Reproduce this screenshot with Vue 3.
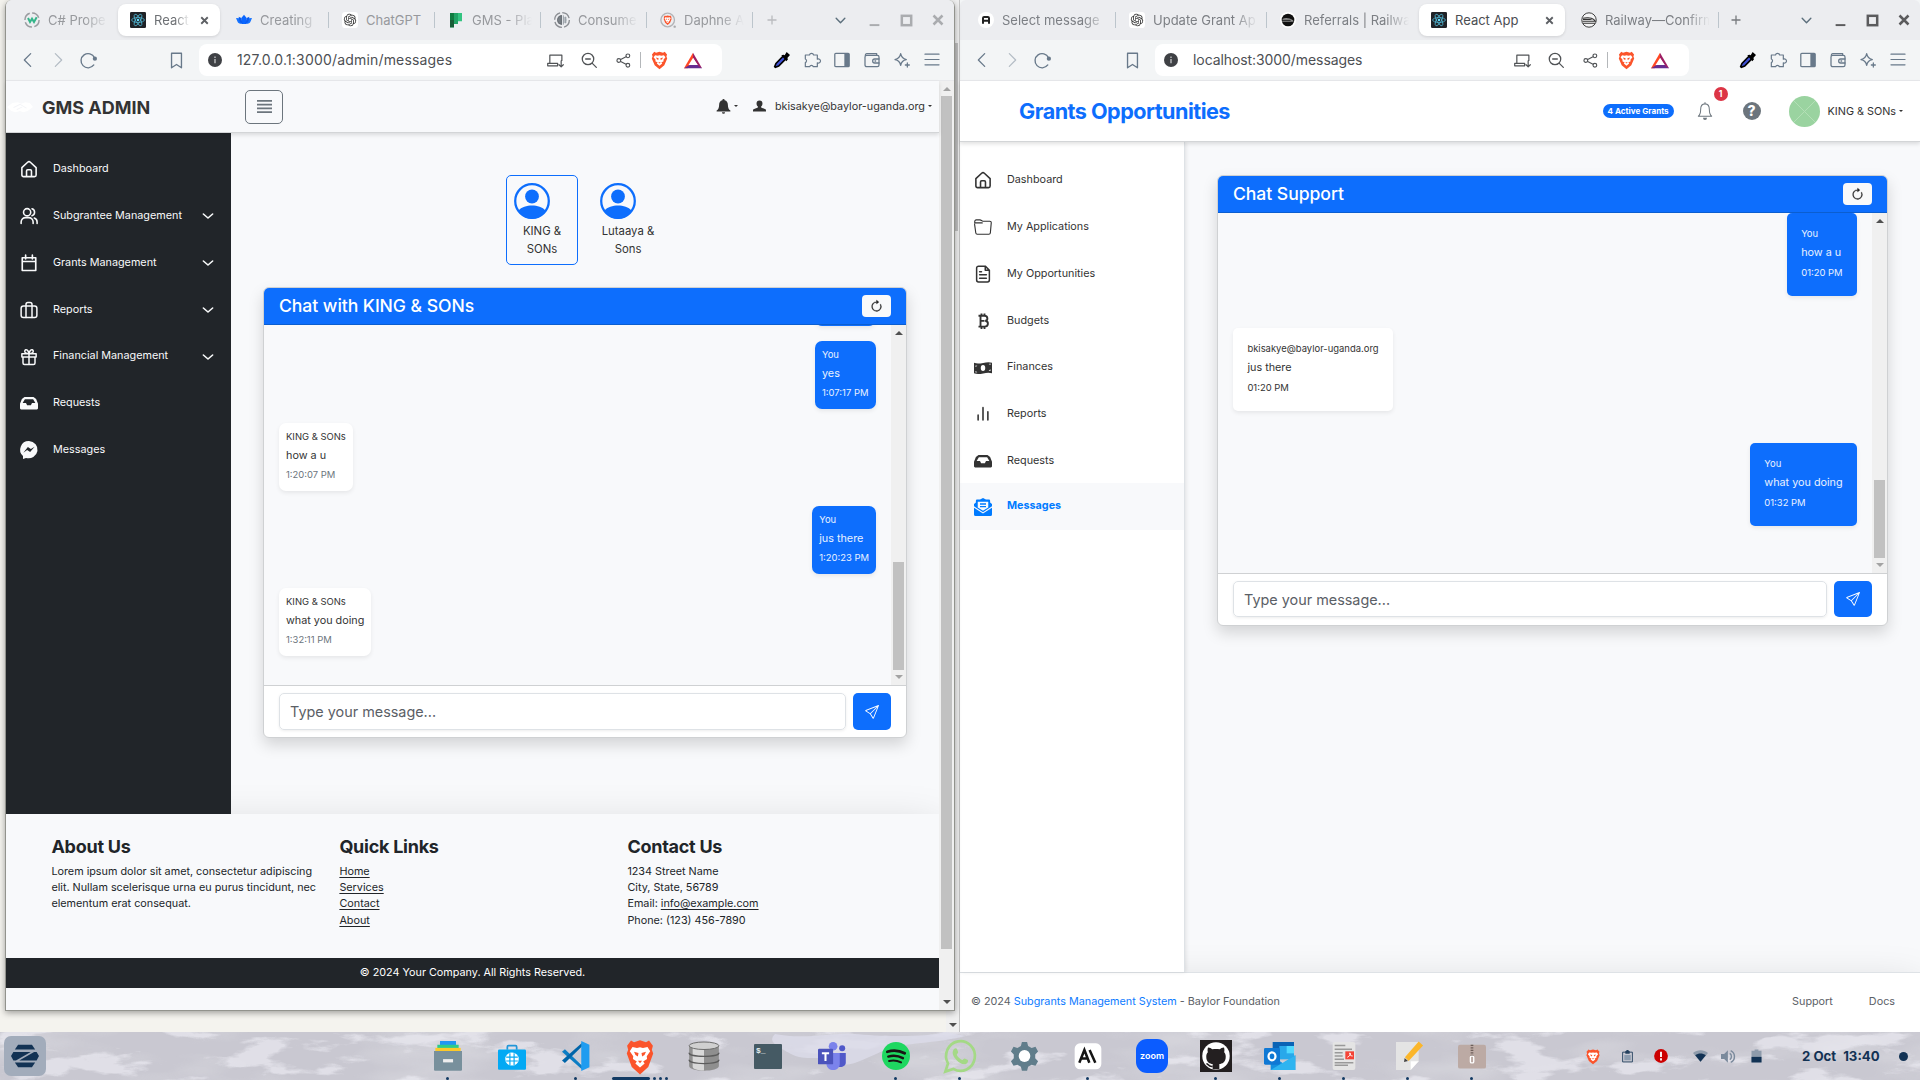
<script setup>
import { h } from 'vue'

const lion = '<path d="M8 3.2 12 2l4 1.2 2-1 2.6 3.2-.7 2.4.9 2.3-3.3 8.3L12 23l-5.500-4.600L3.200 10.100l.9-2.300-.7-2.400L6 2.200z" fill="#fb542b"/><path d="M7 6.200l3 .6 2-.5 2 .5 3-.6 1.800 2.600-2.300 3 .2 1.700-2.600 1.600 1 1.200L12 18.800l-3.100-2.500 1-1.200-2.600-1.600.2-1.700-2.300-3z" fill="#fff"/><path d="M8 9l3 .8-.4 2.200L9 11zM16 9l-3 .8.4 2.200L15 11zM10.600 14.600h2.800L12 16.200z" fill="#fb542b"/>'
const gpt = '<rect width="24" height="24" rx="5" fill="#fff"/><path transform="translate(2.600 2.600) scale(.783)" fill="#333" d="M22.2819 9.8211a5.9847 5.9847 0 0 0-.5157-4.9108 6.0462 6.0462 0 0 0-6.5098-2.9A6.0651 6.0651 0 0 0 4.9807 4.1818a5.9847 5.9847 0 0 0-3.9977 2.9 6.0462 6.0462 0 0 0 .7427 7.0966 5.98 5.98 0 0 0 .511 4.9107 6.051 6.051 0 0 0 6.5146 2.9001A5.9847 5.9847 0 0 0 13.2599 24a6.0557 6.0557 0 0 0 5.7718-4.2058 5.9894 5.9894 0 0 0 3.9977-2.9001 6.0557 6.0557 0 0 0-.7475-7.0729zm-9.022 12.6081a4.4755 4.4755 0 0 1-2.8764-1.0408l.1419-.0804 4.7783-2.7582a.7948.7948 0 0 0 .3927-.6813v-6.7369l2.02 1.1686a.071.071 0 0 1 .038.052v5.5826a4.504 4.504 0 0 1-4.4945 4.4944zm-9.6607-4.1254a4.4708 4.4708 0 0 1-.5346-3.0137l.142.0852 4.783 2.7582a.7712.7712 0 0 0 .7806 0l5.8428-3.3685v2.3324a.0804.0804 0 0 1-.0332.0615L9.74 19.9502a4.4992 4.4992 0 0 1-6.1408-1.6464zM2.3408 7.8956a4.485 4.485 0 0 1 2.3655-1.9728V11.6a.7664.7664 0 0 0 .3879.6765l5.8144 3.3543-2.0201 1.1685a.0757.0757 0 0 1-.071 0l-4.8303-2.7865A4.504 4.504 0 0 1 2.3408 7.872zm16.5963 3.8558L13.1038 8.364 15.1192 7.2a.0757.0757 0 0 1 .071 0l4.8303 2.7913a4.4944 4.4944 0 0 1-.6765 8.1042v-5.6772a.79.79 0 0 0-.407-.667zm2.0107-3.0231l-.142-.0852-4.7735-2.7818a.7759.7759 0 0 0-.7854 0L9.409 9.2297V6.8974a.0662.0662 0 0 1 .0284-.0615l4.8303-2.7866a4.4992 4.4992 0 0 1 6.6802 4.66zM8.3065 12.863l-2.02-1.1638a.0804.0804 0 0 1-.038-.0567V6.0742a4.4992 4.4992 0 0 1 7.3757-3.4537l-.142.0805L8.704 5.459a.7948.7948 0 0 0-.3927.6813zm1.0976-2.3654l2.602-1.4998 2.6069 1.4998v2.9994l-2.5974 1.4997-2.6067-1.4997Z"/>'
const st = (d, w = 2, extra = '') => `<g fill="none" stroke="currentColor" stroke-width="${w}" stroke-linecap="round" stroke-linejoin="round">${d}</g>${extra}`
const train = '<path d="M2.500 9.500C6 8.500 15 8 19 11l2.500 3h-19M3 17h18" fill="none" stroke="currentColor" stroke-width="1.600"/><path d="M3 10.500c5-.8 11-.8 15 1.500H3z" fill="currentColor"/>'

/* Every glyph is drawn on a 24 × 24 grid. */
const glyphs = {
  w3: '<circle cx="12" cy="12" r="10.600" fill="none" stroke="#9a9ca0" stroke-width="2.200" stroke-dasharray="13 3.600"/><path d="M6 9l3 6 3-5 3 5 4-7" fill="none" stroke="#35b58a" stroke-width="3"/>',
  react: '<rect width="24" height="24" rx="2" fill="#1f2227"/><g fill="none" stroke="#4fb3cf" stroke-width="1.200"><ellipse cx="12" cy="12" rx="9.600" ry="3.700"/><ellipse cx="12" cy="12" rx="9.600" ry="3.700" transform="rotate(60 12 12)"/><ellipse cx="12" cy="12" rx="9.600" ry="3.700" transform="rotate(120 12 12)"/></g><circle cx="12" cy="12" r="1.900" fill="#61dafb"/>',
  lotus: '<path d="M12 4l4 5-1 9H9L8 9z" fill="#0a66ff"/><path d="M0 9l5 .5L9 18c-4 0-6-1-7-4zM24 9l-5 .5L15 18c4 0 6-1 7-4z" fill="#1573ff"/><path d="M4 7l4 2 2 9c-4-2-5.500-5-6-11zM20 7l-4 2-2 9c4-2 5.500-5 6-11z" fill="#0b5cf0"/>',
  gpt,
  planner: '<path d="M3 1.500h18V14h-6v4H9v5H3z" fill="#33c481"/><path d="M3 1.500h12V18H9v5H3z" fill="#21a366"/><path d="M3 1.500h6V23H3z" fill="#185c37"/><path d="M3 1.500h6V12H3z" fill="#107c41"/>',
  globe: '<circle cx="12" cy="12" r="11" fill="none" stroke="#8b8e93" stroke-width="2" stroke-dasharray="14 3.300"/><path d="M12 4.500a7.500 7.500 0 0 0 0 15z" fill="#6b7177"/><path d="M14 5v14M17 7v10M14 9h5M14 12h5.500M14 15h5M7 9h3M6 12h4M7 15h3" stroke="#8c949b" stroke-width="1.300"/>',
  lionring: `<circle cx="11.500" cy="12" r="10.200" fill="none" stroke="#b2b3b6" stroke-width="2"/><g transform="translate(3.300 3.800) scale(.68)">${lion}</g><circle cx="22" cy="22" r="1.800" fill="#a9aaad"/>`,
  select: '<circle cx="12" cy="12" r="12" fill="#fff"/><path d="M7.500 17.500V9a1.600 1.600 0 0 1 1.600-1.500h5.800A1.600 1.600 0 0 1 16.500 9v8.500M7.500 13.300h9" fill="none" stroke="#222" stroke-width="3"/>',
  railblack: '<circle cx="12" cy="12" r="12" fill="#fff"/><circle cx="12" cy="12" r="9.500" fill="#111"/><path d="M4 10c5-1.500 10-1.200 15.500 2.500l1 2H3z" fill="#8d8d8d"/><path d="M3 12.500h13M4 16.500h15" stroke="#111" stroke-width="1.300"/>',
  rail: `<circle cx="12" cy="12" r="10.800" fill="#f4f4f5" stroke="#333" stroke-width="1.400"/><g color="#333">${train}</g>`,
  x: '<path d="M6 6l12 12M18 6L6 18" stroke="currentColor" stroke-width="3.400"/>',
  plus: '<path d="M12 3v18M3 12h18" stroke="currentColor" stroke-width="2.600"/>',
  down: st('<path d="M4 8l8 8 8-8"/>', 2.6),
  min: '<path d="M3 20.500h18" stroke="currentColor" stroke-width="3.600"/>',
  max: '<rect x="4.500" y="4.500" width="15" height="15" fill="none" stroke="currentColor" stroke-width="4"/>',
  back: st('<path d="M16 2.500L6.500 12 16 21.500"/>', 1.9),
  fwd: st('<path d="M8 2.500l9.500 9.500L8 21.500"/>', 1.9),
  reload: st('<path d="M19.500 18.300A10 10 0 1 1 20.500 8"/>', 1.9, '<circle cx="21" cy="9.500" r="3" fill="currentColor"/>'),
  mark: st('<path d="M5 1.800h14v20.500l-7-4.600-7 4.600z"/>', 1.9),
  info: '<circle cx="12" cy="12" r="12" fill="#3f4145"/><path d="M12 10.400v7.200M12 6v2.400" stroke="#c9cacc" stroke-width="2.200"/>',
  install: st('<path d="M21 12V4.500H4V16M1 19.500h14V16H1zM20 12.500v8M17 18l3 3 3-3"/>', 1.7),
  zoomout: st('<circle cx="10.500" cy="10.500" r="8.600"/><path d="M17 17l6 6M7 10.500h7"/>', 1.9),
  share: st('<circle cx="19" cy="4.500" r="3"/><circle cx="19" cy="19.500" r="3"/><circle cx="4.500" cy="12" r="3"/><path d="M7.500 10.500l8.500-4.500M7.500 13.500l8.500 4.500"/>', 1.8),
  lion,
  bat: '<path d="M12 1L0 23h5l7-13z" fill="#ff4724"/><path d="M0 23h24l-4.500-4.500h-12z" fill="#662d91"/><path d="M12 1l12 22-4.500-3L12 8z" fill="#9e1f63"/><path d="M12 8.500l6 10H6z" fill="#fff"/>',
  drop: '<path d="M14 6l4 4L7 21l-5 2-1-1 2-5z" fill="#3f51d8" stroke="#000" stroke-width="2.400"/><path d="M11 5l3-1 2 1 3-5 5 4.500L20 9l1 2-2.500 3z" fill="#000"/>',
  puzzle: st('<path d="M2 4.500h6.200a3.200 3.200 0 0 1 6.200 0H20v6.200a3.200 3.200 0 1 1 0 5.600V22H14a3 3 0 0 0-5.600 0H2v-6a3 3 0 0 0 0-5.500z"/>', 1.8),
  panel: '<rect x="1.200" y="2" width="21.600" height="20" rx="1.500" fill="none" stroke="currentColor" stroke-width="1.900"/><path d="M15.500 2h7v20h-7z" fill="currentColor"/>',
  wallet: st('<rect x="1.500" y="5" width="21" height="17" rx="2.500"/><path d="M2 5a2.500 2.500 0 0 1 2-2.500h15V5M22.500 10.500H16a3 3 0 0 0 0 6h6.500M16.500 13.500h1"/>', 1.9),
  spark: st('<path d="M10 2.500c1 5.500 3 7.500 8.500 9-5.500 1-7.500 3-8.500 8.500-1-5.500-3-7.500-8.500-8.500C7 10 9 8 10 2.500zM20 16.500v6M17 19.500h6"/>', 1.9),
  burger: st('<path d="M1.500 3.500h21M1.500 12h21M1.500 20.500h21"/>', 1.9),
  lines: '<path d="M0 3h24M0 9h24M0 15h24M0 21h24" stroke="currentColor" stroke-width="2.900"/>',
  shake: '<path d="M0 12l5-6 5-1 3 2 4-2 4 1 3 6-5 6-4 2-3-2-4 2-4-2z" fill="#fff"/><path d="M6 13l6-5 6 6M9 16l5-4" stroke="#f4f5f8" stroke-width="1.200" fill="none"/>',
  bellfill: '<path d="M12 0a1.800 1.800 0 0 1 1.800 2c3.700.8 5.200 3.800 5.200 7 0 5 1.500 8 4 9.500V20H1v-1.500C3.500 17 5 14 5 9c0-3.200 1.500-6.200 5.200-7A1.800 1.800 0 0 1 12 0zM9.500 21h5a2.500 2.500 0 0 1-5 0z" fill="currentColor"/>',
  person: '<path d="M12 1a5.500 6 0 0 1 5.500 6c0 3-1.300 5-2.500 6v2l8 3.500c1 .5 1 1.500 1 4.500H0c0-3 0-4 1-4.500L9 15v-2c-1.200-1-2.500-3-2.500-6A5.500 6 0 0 1 12 1z" fill="currentColor"/>',
  account: '<circle cx="12" cy="12" r="11.200" fill="none" stroke="currentColor" stroke-width="1.500"/><circle cx="12" cy="9" r="4.600" fill="currentColor"/><path d="M2.800 18.500C5 16 8.500 15 12 15s7 1 9.200 3.500A11.500 11.500 0 0 1 12 24a11.500 11.500 0 0 1-9.200-5.500z" fill="currentColor"/>',
  refresh: '<g transform="scale(1.500)" fill="currentColor" stroke="currentColor" stroke-width=".4"><path d="M8 3a5 5 0 1 0 4.546 2.914.5.5 0 0 1 .908-.417A6 6 0 1 1 8 2z"/><path d="M8 4.466V.534a.25.25 0 0 1 .41-.192l2.360 1.966c.12.1.12.284 0 .384L8.410 4.658A.25.25 0 0 1 8 4.466"/></g>',
  send: '<path transform="scale(1.500)" fill="currentColor" d="M15.854.146a.5.5 0 0 1 .11.54l-5.819 14.547a.75.75 0 0 1-1.329.124l-3.178-4.995L.643 7.184a.75.75 0 0 1 .124-1.330L15.314.037a.5.5 0 0 1 .54.11ZM6.636 10.070l2.761 4.338L14.130 2.576zm6.787-8.201L1.591 6.602l4.339 2.760z"/>',
  home: st('<path d="M2.500 10.200L10.200 3a2.700 2.700 0 0 1 3.600 0l7.700 7.200V20a2.200 2.200 0 0 1-2.200 2.200H4.700A2.200 2.200 0 0 1 2.500 20zM8.700 22v-7.500a1.500 1.500 0 0 1 1.500-1.500h3.600a1.500 1.500 0 0 1 1.500 1.500V22"/>', 2.1),
  users: st('<circle cx="9.500" cy="7" r="4.800"/><path d="M1.500 22v-2a6 6 0 0 1 6-5.800h4a6 6 0 0 1 6 5.800v2M16 2.400a4.800 4.800 0 0 1 0 9.200M19 14.800A5.500 5.500 0 0 1 22.800 20v2"/>', 2.1),
  calendar: st('<path d="M3 5h18v17H3zM3 10h18M7.500 1.500v5M16.500 1.500v5"/>', 2.2),
  suitcase: st('<rect x="1.500" y="6.500" width="21" height="15.500" rx="3"/><path d="M8 22V4.500A2.500 2.500 0 0 1 10.500 2h3A2.500 2.500 0 0 1 16 4.500V22"/>', 2),
  gift: st('<path d="M2.500 7.500h19V12h-19zM4 12h16v8a2 2 0 0 1-2 2H6a2 2 0 0 1-2-2zM12 7.500V22M12 7.500C8 7.500 5.500 6 6.500 3.500S11 2 12 7.500c1-5.500 4.500-6.500 5.500-4S16 7.500 12 7.500z"/>', 2),
  inbox: '<path d="M6 4h12l3.500 2.500L24 13v6a1.500 1.500 0 0 1-1.500 1.500h-21A1.500 1.500 0 0 1 0 19v-6l2.500-6.500zM6.500 7L3.500 12H8l1.500 3h5l1.500-3h4.500l-3-5z" fill="currentColor" fill-rule="evenodd"/>',
  messenger: '<path d="M12 0a12 11.500 0 1 1-4 22.500L4 24v-4A11.500 11.500 0 0 1 12 0zM4.500 15.500l5-3.500 4 2.500 6-7-5 3-4-2.500z" fill="currentColor" fill-rule="evenodd"/>',
  folder: st('<path d="M1 7V4.500A2 2 0 0 1 3 2.500h5c1.500 0 2.500 1.800 4 1.800h9a2 2 0 0 1 2 2.200L21.800 20a2 2 0 0 1-2 1.700H4.400a2 2 0 0 1-2-1.700L.8 8.500M1.500 6.500H11"/>', 1.5),
  doc: st('<path d="M15 1.500H6A2.500 2.500 0 0 0 3.500 4v16A2.500 2.500 0 0 0 6 22.500h12a2.500 2.500 0 0 0 2.500-2.500V7zM15 1.500V7h5.500M7.500 9H10M7.500 13h9M7.500 17.500h9"/>', 2),
  bitcoin: '<path d="M6 5h7.500c5.500 0 5.500 6 1.500 6.700 5 .8 4.800 7.800-1 7.800H6M8.700 5v14.500M8.700 11.800H14M10 2v3M14 2v3M10 19.500v3M14 19.500v3" fill="none" stroke="currentColor" stroke-width="2.500"/>',
  money: '<path d="M0 5c8 3.500 16-3 24 0v14c-8-3-16 3.500-24 0zM12 8a3 4 0 0 0 0 8 3 4 0 0 0 0-8zM2 8.500L4.500 9 2 10.500zM2 16l2.500 1.500L2 18zM22 6l-2.500.500L22 8zM22 13.500L19.500 15.500l2.500.500z" fill="currentColor" fill-rule="evenodd"/>',
  bars: st('<path d="M5.500 13.500V20M12 3.500V20M18.500 9V20"/>', 2.1),
  mail: '<path d="M12 0l4 2h4a1.500 1.500 0 0 1 1.500 1.500V6L24 8v3l-12 8L0 11V8l2.500-2V3.500A1.500 1.500 0 0 1 4 2h4zM5 5v7.500L12 17l7-4.500V5z" fill="currentColor" fill-rule="evenodd"/><path d="M8 8h8M8 11.500h8" stroke="currentColor" stroke-width="1.900"/><path d="M0 13l12 7.500L24 13v9a2 2 0 0 1-2 2H2a2 2 0 0 1-2-2z" fill="currentColor"/>',
  bell: st('<path d="M12 2.500c4.500 0 6.500 3.500 6.500 7.500 0 5 1.500 7.500 3.500 9H2c2-1.500 3.500-4 3.500-9 0-4 2-7.500 6.500-7.500zM12 2.500V.8"/>', 1.5, '<path d="M9 21h6a3 3 0 0 1-6 0z" fill="currentColor"/>'),

  zorin: '<g fill="#123254"><path d="M6.800 3h10.400l2.400 3.800H4.400zM6.800 21h10.400l2.400-3.800H4.400zM3.300 8.800h13L5.200 15.600H3.300L1.500 12zM20.700 15.600h-13l11.100-6.800h1.900l1.800 3.200z"/></g>',
  files: '<path d="M6 0h12v4H6z" fill="#2196f3"/><path d="M4 3h16v4H4z" fill="#2ecc8a"/><path d="M2.500 5.500h19V10h-19z" fill="#fcc92a"/><path d="M1.500 8h21v15a.800.800 0 0 1-.8.800H2.300a.8.800 0 0 1-.8-.8z" fill="#78909c"/><rect x="8.300" y="14.500" width="7.500" height="2.600" fill="#eee"/>',
  store: '<path d="M8 6V3.500C8 2.500 8.500 2.300 9 2.300h6c.5 0 1 .2 1 1.200V6" fill="none" stroke="#2196d8" stroke-width="1.500"/><rect x="0" y="5.800" width="24" height="18" rx="1" fill="#03a9f4"/><circle cx="12" cy="14.300" r="5.800" fill="#fff"/><path d="M7 12.500h10M7 16h10M10.200 9v10.500M13.800 9v10.500" stroke="#03a9f4" stroke-width="1"/>',
  vscode: '<path d="M0 8.500l2.500-2L17.500 20l-.5 2.500z" fill="#0c7dc4"/><path d="M0 15.500l2.500 2L17.500 4 17 1.500z" fill="#0065a9"/><path d="M16.500 0L23.500 3v18l-7 3z" fill="#1f9cf0"/>',
  cylinder: '<path d="M1.500 4v16c0 5 21 5 21 0V4z" fill="#8f8f8f"/><path d="M4 4h8v19.500c-4 0-8-1-8-3z" fill="#d8d8d8"/><ellipse cx="12" cy="3.800" rx="10.500" ry="3" fill="#d0d0d0" stroke="#666" stroke-width=".7"/><path d="M1.500 9.300c0 4 21 4 21 0M1.500 15c0 4 21 4 21 0" fill="none" stroke="#5c5c5c"/>',
  teams: '<circle cx="12.500" cy="3.500" r="3.600" fill="#7b83eb"/><circle cx="20" cy="5.200" r="2.500" fill="#5059c9"/><path d="M15 9h8v8c0 4-6 5-8 2z" fill="#5059c9"/><path d="M7 9h11v9c0 7-11 7-11 0z" fill="#7b83eb"/><rect x="0" y="5.500" width="12.500" height="13" rx="1" fill="#4b53bc"/><path d="M3.200 9.300h6M6.200 9.300v6.500" stroke="#fff" stroke-width="1.700"/>',
  spotify: '<circle cx="12" cy="12" r="10.500" fill="#1ed760"/><g fill="none" stroke="#191414" stroke-linecap="round"><path d="M5.500 8.800c4.500-1.400 9-1 13 1.200" stroke-width="2.100"/><path d="M6.200 12.400c4-1.100 7.500-.7 11 1.200" stroke-width="1.800"/><path d="M6.800 15.700c3.300-.8 6-.500 9 1.100" stroke-width="1.500"/></g>',
  whatsapp: '<path d="M1 23L3 17A10.800 10.800 0 1 1 7 21z" fill="none" stroke="#a4d986" stroke-width="2"/><path d="M7.500 6.500c1-1 2-.5 2.300.3l.8 2c.2.800-1 1.500-1 2 .8 1.800 2.200 3 4 3.700.5.200 1.300-1.300 2-1.100l2 1c.8.400.5 2.600-1.500 3.200-4 1-9.600-5-9.600-8.100 0-1.200.4-2.400 1-3z" fill="#a4d986"/>',
  gear: '<path d="M10 1.500h4l.8 3 2.700 1.500 3-.9 2 3.500-2.200 2.200v2.900l2.200 2.200-2 3.500-3-.9-2.700 1.500-.8 3h-4l-.8-3-2.700-1.500-3 .9-2-3.500 2.200-2.200v-2.900L1.500 8.600l2-3.500 3 .9L9.200 4.500z" fill="#607d8b"/><circle cx="12" cy="12" r="4.500" fill="#fff"/>',
  ai: '<rect x="2" y="2.500" width="20" height="19.500" rx="4" fill="#fff"/><path d="M5.500 17L9.300 7.500 13 17M7 13.800h4.800M13.200 7.500L17.500 17" fill="none" stroke="#151515" stroke-width="1.900"/>',
  github: '<rect width="24" height="24" fill="#231f20"/><circle cx="12" cy="12" r="10.300" fill="#fff"/><path d="M9.500 22v-4c-2-.3-4.800-1-4.800-5.500 0-1.500.5-2.500 1.200-3.300-.3-1-.3-2.400.1-3.500 1.300 0 2.500.8 3.300 1.300 1.700-.4 3.700-.4 5.400 0 .8-.5 2-1.300 3.300-1.300.4 1.100.4 2.500.1 3.500.7.8 1.200 1.800 1.200 3.300 0 4.500-2.800 5.200-4.800 5.500v4z" fill="#231f20"/><path d="M9.500 19.800c-3.500.5-3-2-4.700-2" stroke="#231f20" stroke-width="1.200" fill="none"/>',
  outlook: '<path d="M6.500 1.500h16V12h-16z" fill="#0a63b5"/><path d="M11.500 4.500h11v10h-11z" fill="#28a8ea"/><path d="M17 4.500h5.500V10H17z" fill="#50d9ff"/><path d="M5 11.500l9.300 6 9.200-6v11H5z" fill="#1490df"/><path d="M5 22.500l18.500-11v11z" fill="#2fb4f0"/><rect x="0" y="6" width="12" height="12.500" rx="1" fill="#0f78d4"/><ellipse cx="6" cy="12.200" rx="2.600" ry="3" fill="none" stroke="#fff" stroke-width="1.700"/>',
  reader: '<rect x="3.500" y="1.500" width="17" height="21" rx="1.500" fill="#e4e4e4"/><path d="M5 4.200h8M5 7h13M5 9.500h6M5 12h6M5 14.500h7M5 17h14M5 19h10" stroke="#999" stroke-width="1.100"/><rect x="13" y="8.500" width="6.500" height="6" fill="#f44336"/><path d="M14.500 13c2-1 3-3 2-3.300s0 2.500 2 2.300" stroke="#fff" stroke-width=".7" fill="none"/>',
  editor: '<path d="M3 1.500h17v14.500l-6 6.500H3z" fill="#e4e4e4"/><path d="M14 22.500V16h6z" fill="#fff"/><path d="M9.500 13.500l-.5 3 3-.8z" fill="#444"/><path d="M9.700 13L20 1.200l3.300 3-10.800 11.500z" fill="#fbb62a"/>',
  zip: '<rect x="1.500" y="3" width="21" height="19" rx="1.500" fill="#bcaaa4"/><path d="M12 3v9" stroke="#6d5f5a" stroke-width="2" stroke-dasharray="1 1"/><rect x="10.800" y="12" width="2.500" height="5.500" rx="1" fill="none" stroke="#fff"/>',
  clip: '<path d="M3 4h18v18H3z" fill="none" stroke="#24415f" stroke-width="1.700"/><path d="M6 9h12v10H6z" fill="#8d9db0"/><path d="M8 2h2V0h4v2h2v5H8z" fill="#24415f"/>',
  alert: '<circle cx="12" cy="12" r="11.800" fill="#cc0000"/><path d="M12 4.500v9.300M12 16v3.500" stroke="#fff" stroke-width="3.200"/>',
  wifi: '<path d="M0 7C7 .5 17 .5 24 7L12 22z" fill="#8e9bab"/><path d="M3.500 10.500c5-4 12-4 17 0L12 22z" fill="#123254"/>',
  vol: '<path d="M0 8h5l6-6v20l-6-6H0z" fill="#7b8a9c"/><path d="M14 7a6 6 0 0 1 0 10M15.500 2.500a10.500 10.500 0 0 1 0 19" fill="none" stroke="#7b8a9c" stroke-width="2.300"/>',
  battery: '<path d="M4 3h5V1h6v2h5v20H4z" fill="#8e9bab"/><path d="M4 13.500h16V23H4z" fill="#123254"/>',
}
const Ico = (p) => h('svg', { viewBox: '0 0 24 24', width: p.s || 16, height: p.h || p.s || 16, preserveAspectRatio: 'none', innerHTML: glyphs[p.n] })
Ico.props = ['n', 's', 'h']

const windows = [
  {
    id: 'admin',
    url: '127.0.0.1:3000/admin/messages',
    tabs: [
      { icon: 'w3', label: 'C# Prope' },
      { icon: 'react', label: 'React', active: true },
      { icon: 'lotus', label: 'Creating', sep: true },
      { icon: 'gpt', label: 'ChatGPT', sep: true },
      { icon: 'planner', label: 'GMS - Pla', sep: true },
      { icon: 'globe', label: 'Consume', sep: true },
      { icon: 'lionring', label: 'Daphne A', sep: true },
    ],
    menu: [
      { icon: 'home', label: 'Dashboard' },
      { icon: 'users', label: 'Subgrantee Management', more: true },
      { icon: 'calendar', label: 'Grants Management', more: true },
      { icon: 'suitcase', label: 'Reports', more: true },
      { icon: 'gift', label: 'Financial Management', more: true },
      { icon: 'inbox', label: 'Requests' },
      { icon: 'messenger', label: 'Messages' },
    ],
    title: 'Chat with KING & SONs',
    messages: [
      { mine: true, clipped: true },
      { mine: true, from: 'You', text: 'yes', time: '1:07:17 PM' },
      { from: 'KING & SONs', text: 'how a u', time: '1:20:07 PM' },
      { mine: true, from: 'You', text: 'jus there', time: '1:20:23 PM' },
      { from: 'KING & SONs', text: 'what you doing', time: '1:32:11 PM' },
    ],
  },
  {
    id: 'client',
    url: 'localhost:3000/messages',
    tabs: [
      { icon: 'select', label: 'Select message', sep: true },
      { icon: 'gpt', label: 'Update Grant Ap', sep: true },
      { icon: 'railblack', label: 'Referrals | Railwa' },
      { icon: 'react', label: 'React App', active: true },
      { icon: 'rail', label: 'Railway—Confirm', sep: true },
    ],
    menu: [
      { icon: 'home', label: 'Dashboard' },
      { icon: 'folder', label: 'My Applications' },
      { icon: 'doc', label: 'My Opportunities' },
      { icon: 'bitcoin', label: 'Budgets' },
      { icon: 'money', label: 'Finances' },
      { icon: 'bars', label: 'Reports' },
      { icon: 'inbox', label: 'Requests' },
      { icon: 'mail', label: 'Messages', active: true },
    ],
    title: 'Chat Support',
    messages: [
      { mine: true, from: 'You', text: 'how a u', time: '01:20 PM' },
      { from: 'bkisakye@baylor-uganda.org', text: 'jus there', time: '01:20 PM' },
      { mine: true, from: 'You', text: 'what you doing', time: '01:32 PM' },
    ],
  },
]
const contacts = [
  { lines: ['KING &', 'SONs'], active: true },
  { lines: ['Lutaaya &', 'Sons'] },
]
const apps = [
  { icon: 'files', w: 32, h: 30, run: true }, { icon: 'store', w: 28, h: 27 }, { icon: 'vscode', w: 28, h: 30, run: true },
  { icon: 'lion', w: 36, h: 39, focus: true }, { icon: 'cylinder', w: 34, h: 30 }, { icon: 'terminal' },
  { icon: 'teams', w: 29, h: 29 }, { icon: 'spotify', w: 32, h: 32, run: true }, { icon: 'whatsapp', w: 32, h: 33, run: true },
  { icon: 'gear', w: 31, h: 32 }, { icon: 'ai', w: 32, h: 32, run: true }, { icon: 'zoom' },
  { icon: 'github', w: 32, h: 32, run: true }, { icon: 'outlook', w: 32, h: 32, run: true }, { icon: 'reader', w: 32, h: 32, run: true },
  { icon: 'editor', w: 32, h: 32, run: true }, { icon: 'zip', w: 32, h: 30, run: true },
]
</script>

<template>
  <div class="desktop">
    <div class="behind"><i class="thumb"></i><i class="arrow down"></i></div>

    <section v-for="w in windows" :key="w.id" class="window" :class="w.id">
      <div class="tabstrip">
        <div v-for="t in w.tabs" :key="t.label" class="tab" :class="{ active: t.active, sep: t.sep }">
          <span class="fav"><Ico :n="t.icon" s="16" /></span>
          <span class="label">{{ t.label }}</span>
          <span v-if="t.active" class="close"><Ico n="x" s="13" /></span>
        </div>
        <span class="newtab"><Ico n="plus" s="12" /></span>
        <div class="controls">
          <span class="chev"><Ico n="down" s="13" /></span>
          <span><Ico n="min" s="13" /></span>
          <span><Ico n="max" s="15" /></span>
          <span><Ico n="x" s="18" /></span>
        </div>
      </div>
      <div class="toolbar">
        <span class="slot"><Ico n="back" s="16" /></span>
        <span class="slot dim"><Ico n="fwd" s="16" /></span>
        <span class="slot"><Ico n="reload" s="17" /></span>
        <span class="slot mark"><Ico n="mark" s="17" /></span>
        <div class="urlbox">
          <Ico n="info" s="14" />
          <span class="url">{{ w.url }}</span>
          <span class="act"><Ico n="install" s="17" /></span>
          <span class="act"><Ico n="zoomout" s="16" /></span>
          <span class="act"><Ico n="share" s="15" /></span>
          <i class="vsep"></i>
          <span class="act"><Ico n="lion" s="21" h="20" /></span>
          <span class="act"><Ico n="bat" s="18" h="17" /></span>
        </div>
        <div class="exts">
          <span class="slot"><Ico n="drop" s="16" /></span>
          <span class="slot"><Ico n="puzzle" s="16" /></span>
          <span class="slot"><Ico n="panel" s="16" /></span>
          <span class="slot"><Ico n="wallet" s="16" /></span>
          <span class="slot"><Ico n="spark" s="16" /></span>
          <span class="slot"><Ico n="burger" s="16" h="15" /></span>
        </div>
      </div>

      <div class="viewport">
        <div class="page">
          <header v-if="w.id === 'admin'" class="top">
            <span class="logo"><Ico n="shake" s="26" h="16" /></span>
            <h1>GMS ADMIN</h1>
            <button class="toggle"><Ico n="lines" s="15" /></button>
            <div class="user">
              <span class="belldark"><Ico n="bellfill" s="15" /></span><i class="caret"></i>
              <span class="who"><Ico n="person" s="13" h="12" /></span>
              <span class="mailtext">bkisakye@baylor-uganda.org</span><i class="caret"></i>
            </div>
          </header>
          <header v-else class="top">
            <h1>Grants Opportunities</h1>
            <div class="user">
              <span class="pill">4 Active Grants</span>
              <span class="bellbox"><Ico n="bell" s="16" h="18" /><b>1</b></span>
              <span class="help">?</span>
              <span class="avatar"></span>
              <span>KING &amp; SONs</span><i class="caret"></i>
            </div>
          </header>

          <div class="body">
            <nav class="side">
              <a v-for="m in w.menu" :key="m.label" class="item" :class="{ active: m.active }">
                <Ico :n="m.icon" s="18" />
                <span>{{ m.label }}</span>
                <span v-if="m.more" class="more"><Ico n="down" s="14" h="12" /></span>
              </a>
            </nav>
            <main class="main">
              <div v-if="w.id === 'admin'" class="contacts">
                <div v-for="c in contacts" :key="c.lines[0]" class="contact" :class="{ active: c.active }">
                  <Ico n="account" s="36" />
                  <span v-for="l in c.lines" :key="l">{{ l }}</span>
                </div>
              </div>
              <div class="card">
                <div class="card-head">
                  <h2>{{ w.title }}</h2>
                  <button class="again"><Ico n="refresh" s="13" /></button>
                </div>
                <div class="chat">
                  <div class="log">
                    <div v-for="(m, i) in w.messages" :key="i" class="bubble" :class="{ mine: m.mine, clipped: m.clipped }">
                      <small>{{ m.from }}</small>
                      <p>{{ m.text }}</p>
                      <small class="time">{{ m.time }}</small>
                    </div>
                  </div>
                  <div class="bar"><i class="arrow up"></i><i class="thumb"></i><i class="arrow down off"></i></div>
                </div>
                <div class="compose">
                  <div class="field">Type your message...</div>
                  <button class="send"><Ico n="send" s="14" /></button>
                </div>
              </div>
            </main>
          </div>

          <footer v-if="w.id === 'admin'" class="foot">
            <div class="cols">
              <div>
                <h3>About Us</h3>
                <p>Lorem ipsum dolor sit amet, consectetur adipiscing<br />elit. Nullam scelerisque urna eu purus tincidunt, nec<br />elementum erat consequat.</p>
              </div>
              <div>
                <h3>Quick Links</h3>
                <p><u>Home</u><br /><u>Services</u><br /><u>Contact</u><br /><u>About</u></p>
              </div>
              <div>
                <h3>Contact Us</h3>
                <p>1234 Street Name<br />City, State, 56789<br />Email: <u>info@example.com</u><br />Phone: (123) 456-7890</p>
              </div>
            </div>
            <div class="copy">© 2024 Your Company. All Rights Reserved.</div>
          </footer>
          <footer v-else class="foot">
            <span>© 2024 <a>Subgrants Management System</a> - Baylor Foundation</span>
            <span class="links"><span>Support</span><span>Docs</span></span>
          </footer>
        </div>
        <div v-if="w.id === 'admin'" class="bar pagebar"><i class="arrow up off"></i><i class="thumb"></i><i class="arrow down"></i></div>
      </div>
    </section>

    <div class="taskbar">
      <svg class="marble" width="1920" height="48">
        <filter id="veins" x="0" y="0" width="100%" height="100%">
          <feTurbulence type="fractalNoise" baseFrequency="0.014 0.045" numOctaves="5" seed="11" />
          <feColorMatrix values="0 0 0 0 .87  0 0 0 0 .865  0 0 0 0 .925  9 0 0 0 -5.100" />
        </filter>
        <filter id="shade" x="0" y="0" width="100%" height="100%">
          <feTurbulence type="fractalNoise" baseFrequency="0.008 0.03" numOctaves="3" seed="4" />
          <feColorMatrix values="0 0 0 0 .72  0 0 0 0 .72  0 0 0 0 .76  3 0 0 0 -1.400" />
        </filter>
        <rect width="1920" height="48" filter="url(#shade)" opacity=".55" />
        <rect width="1920" height="48" filter="url(#veins)" opacity=".6" />
        <path d="M775 2c30 6 60-2 80 0s70 4 90-2l20 4c-30 8-60 6-80 14s-36 20-50 12-30 0-44-8-24-12-16-20z" fill="#dcdcea" opacity=".8" />
      </svg>
      <div class="start"><Ico n="zorin" s="32" h="30" /></div>
      <div class="apps">
        <div v-for="a in apps" :key="a.icon" class="app">
          <span v-if="a.icon === 'terminal'" class="term">$_</span>
          <span v-else-if="a.icon === 'zoom'" class="zoomapp">zoom</span>
          <Ico v-else :n="a.icon" :s="a.w" :h="a.h" />
          <i v-if="a.run" class="dot"></i>
          <span v-if="a.focus" class="focus"><i></i><i></i><i></i><i></i></span>
        </div>
      </div>
      <div class="tray">
        <span><Ico n="lion" s="18" h="17" /></span><span><Ico n="clip" s="13" /></span><span class="wide"><Ico n="alert" s="14" /></span>
        <span class="near"><Ico n="wifi" s="15" h="14" /></span><span class="near"><Ico n="vol" s="15" /></span><span class="near"><Ico n="battery" s="15" h="14" /></span>
      </div>
      <div class="clock"><span>2 Oct</span><span>13:40</span><i></i></div>
    </div>
  </div>
</template>

<style>
body { margin: 0; overflow: hidden; }
</style>

<style scoped>
.desktop { position: relative; width: 1920px; height: 1080px; overflow: hidden; background: #f4f3ee; font-family: Inter, "Noto Sans", sans-serif; font-size: 10.8px; color: #212529; }
.desktop * { box-sizing: border-box; }
svg { display: block; flex: none; overflow: visible; }
h1, h2, h3, p { margin: 0; }
button { padding: 0; border: 0; display: flex; align-items: center; justify-content: center; }

.behind { position: absolute; left: 946px; top: 0; width: 13px; height: 1032px; background: #f0f0f0; display: flex; flex-direction: column; justify-content: space-between; align-items: center; padding: 43px 0 5px; }
.behind .thumb { width: 11px; height: 188px; background: #c1c1c1; }

.window { position: absolute; top: 0; display: flex; flex-direction: column; background: #f3f5f6; }
.admin { left: 5px; width: 950px; height: 1011px; border: 1px solid #92938d; border-top: 0; border-radius: 7px 7px 0 0; box-shadow: 0 2px 6px rgba(0, 0, 0, .35); z-index: 2; }
.client { left: 959px; width: 961px; height: 1032px; border-left: 1px solid #c6c6c6; }

.tabstrip { height: 40px; flex: none; display: flex; align-items: center; background: #ecedf0; padding-left: 6px; border-radius: 6px 6px 0 0; }
.tab { position: relative; display: flex; align-items: center; height: 32px; font-size: 13px; line-height: 20px; color: #7c7f84; flex: none; }
.admin .tab { width: 106px; color: #97999d; }
.client .tab { width: 151px; }
.admin .tab.active { width: 102px; margin-right: 4px; color: #6e7175; }
.client .tab.active { width: 146px; margin-right: 4px; color: #4b4e52; }
.tab.active { background: #fff; border-radius: 8px; box-shadow: 0 1px 3px rgba(0, 0, 0, .12); }
.tab.sep::after { content: ""; position: absolute; right: 1px; top: 8px; width: 1px; height: 16px; background: #bcc5cc; }
.fav { width: 36px; padding-left: 12px; flex: none; }
.label { flex: 1; white-space: nowrap; width: 0; -webkit-mask-image: linear-gradient(90deg, #000 calc(100% - 34px), transparent calc(100% - 10px)); mask-image: linear-gradient(90deg, #000 calc(100% - 34px), transparent calc(100% - 10px)); }
.admin .tab:nth-child(4) .label { -webkit-mask-image: none; mask-image: none; }
.client .tab.active .label { -webkit-mask-image: none; mask-image: none; }
.admin .tab.active .label { -webkit-mask-image: linear-gradient(90deg, #000 calc(100% - 18px), transparent calc(100% - 3px)); mask-image: linear-gradient(90deg, #000 calc(100% - 18px), transparent calc(100% - 3px)); }
.close { width: 27px; padding-left: 5px; color: #5d6064; flex: none; }
.newtab { margin-left: 12px; color: #b9bbbe; }
.client .newtab { margin-left: 10px; color: #777a7e; }
.controls { display: flex; margin-left: auto; align-items: center; color: #aaacaf; }
.controls span { width: 32px; display: flex; justify-content: center; }
.controls .chev { width: 36px; color: #5c6f7c; }
.client .controls { color: #5b5b5d; }

.toolbar { height: 41px; flex: none; display: flex; align-items: center; padding: 0 7px; background: #f3f5f6; border-bottom: 1px solid #e8e9ec; color: #68798a; }
.slot { width: 30px; display: flex; justify-content: center; }
.dim { opacity: .45; }
.mark { margin-left: 58px; margin-right: 8px; }
.client .mark { margin-left: 60px; }
.urlbox { width: 523px; height: 32px; border-radius: 8px; background: #fff; display: flex; align-items: center; padding: 0 12px 0 9px; color: #505356; }
.client .urlbox { width: 534px; }
.url { margin-left: 15px; margin-top: -1px; flex: 1; font-size: 14px; letter-spacing: .18px; color: #4d5054; }
.client .url { letter-spacing: -.08px; }
.act { width: 34px; display: flex; justify-content: center; }
.urlbox .act:nth-of-type(2), .urlbox .act:nth-of-type(3), .urlbox .act:nth-of-type(4) { margin-left: -1px; margin-right: 1px; }
.vsep { width: 1px; height: 16px; background: #b4b7ba; margin: 0 1px 0 -1px; }
.exts { display: flex; margin-left: auto; }

.viewport { flex: 1; display: flex; min-height: 0; }
.page { flex: 1; display: flex; flex-direction: column; background: #f8f9fb; min-width: 0; }
.top { position: relative; z-index: 3; flex: none; display: flex; align-items: center; box-shadow: 0 2px 4px rgba(0, 0, 0, .12); border-bottom: 1px solid #d3d5d7; color: #333; }
.admin .top { height: 52px; background: #f8f9fb; }
.client .top { height: 61px; background: #fff; }
.logo { width: 36px; padding-left: 1px; }
.admin h1 { width: 203px; font-size: 18px; font-weight: 700; color: #333; white-space: nowrap; margin-top: 2px; }
.client h1 { margin-left: 59px; font-size: 21.6px; letter-spacing: -.52px; font-weight: 700; color: #0d6efd; }
.toggle { width: 38px; height: 34px; border: 1px solid #6c757d; border-radius: 5px; background: none; color: #6c757d; }
.user { display: flex; align-items: center; margin-left: auto; white-space: nowrap; }
.admin .user { padding-right: 7px; margin-top: -1px; }
.client .user { padding-right: 17px; }
.caret { display: block; width: 4px; height: 0; border: 2px solid transparent; border-top-color: #333; border-bottom: 0; margin-left: 3px; }
.who { margin: 0 9px 0 15px; }
.pill { width: 71px; height: 14px; border-radius: 7px; background: #0d6efd; color: #fff; font-size: 8.1px; line-height: 14px; font-weight: 700; text-align: center; }
.bellbox { position: relative; margin-left: 23px; color: #6c757d; }
.bellbox b { position: absolute; left: 17px; top: -15px; width: 14px; height: 14px; border-radius: 50%; background: #dc3545; color: #fff; font-size: 8.5px; line-height: 14px; text-align: center; }
.help { width: 18px; height: 18px; border-radius: 50%; background: #6c757d; color: #fff; font-size: 14px; line-height: 18px; font-weight: 800; text-align: center; margin-left: 30px; }
.avatar { width: 31px; height: 31px; border-radius: 50%; margin: 0 8px 0 28px; background: linear-gradient(45deg, transparent 49.300%, #b3dfb6 49.300%, #b3dfb6 50.700%, transparent 50.700%), linear-gradient(-45deg, transparent 49.300%, #b3dfb6 49.300%, #b3dfb6 50.700%, transparent 50.700%), #9ad3a0; }

.body { display: flex; flex: none; }
.admin .body { height: 681px; }
.client .body { height: 830px; }
.side { flex: none; width: 225px; position: relative; z-index: 1; }
.admin .side { background: #212529; color: #f8f9fa; padding-top: 12px; }
.client .side { background: #fff; color: #333; padding-top: 14px; border-right: 1px solid #dee2e6; box-shadow: 1px 0 4px rgba(0, 0, 0, .1); }
.item { display: flex; align-items: center; height: 46.900px; padding-left: 14px; }
.item svg { margin-top: 1px; }
.item span { margin-left: 15px; margin-top: -.2px; }
.item .more { margin: 1px 16px 0 auto; }
.item.active { background: #f8f9fb; color: #007bff; font-weight: 700; margin-top: -1px; }
.item.active span { margin-top: -2.500px; }
.main { flex: 1; padding: 0 32px; min-width: 0; }
.admin .main { padding-top: 42px; }
.client .main { padding-top: 33px; }

.contacts { display: flex; justify-content: center; gap: 14px; margin-bottom: 22px; }
.contact { width: 72px; height: 90px; border: 1px solid transparent; border-radius: 5px; padding: 7px; display: flex; flex-direction: column; font-size: 11.340px; line-height: 18px; text-align: center; color: #333; }
.contact svg { color: #0d6efd; margin-bottom: 2.600px; }
.contact span { white-space: nowrap; margin: 0 -4px; }
.contact.active { border-color: #0d6efd; }

.card { height: 451px; border: 1px solid #cfd1d3; border-radius: 6px; background: #fff; box-shadow: 0 7px 15px rgba(0, 0, 0, .15); overflow: hidden; display: flex; flex-direction: column; }
.card-head { height: 37px; flex: none; display: flex; align-items: center; justify-content: space-between; padding: 0 15px; background: #0d6efd; border-bottom: 1px solid #0b5ed0; color: #fff; }
.card-head h2 { font-size: 17.600px; letter-spacing: -.06px; font-weight: 500; margin-top: -2px; }
.again { width: 29px; height: 22px; border-radius: 4px; background: #f8f9fa; color: #222; }
.chat { height: 360px; flex: none; display: flex; background: #f8f9fb; }
.log { flex: 1; display: flex; flex-direction: column; justify-content: flex-end; align-items: flex-start; overflow: hidden; padding: 0 15px; }
.admin .log { gap: 14.500px; padding-bottom: 28.800px; }
.client .log { gap: 32px; padding-bottom: 47px; }
.bubble { flex: none; background: #fff; box-shadow: 0 2px 4px rgba(0, 0, 0, .075); display: flex; flex-direction: column; white-space: nowrap; color: #333; }
.bubble small { font-size: 9.450px; line-height: 16px; }
.bubble p { line-height: 21px; margin-bottom: -1px; position: relative; }
.admin .bubble { height: 68px; min-width: 61px; padding: 6px 7px 0; border-radius: 7px; }
.admin .bubble p { line-height: 21.400px; margin-bottom: -1.200px; }
.admin .bubble .time { line-height: 19px; color: #6c757d; }
.client .bubble { height: 83px; padding: 13px 14.400px 0; border-radius: 5px; }
.client .bubble p { line-height: 22px; margin-bottom: -1px; }
.client .bubble .time { line-height: 20px; }
.bubble.mine, .admin .bubble.mine .time { background: #0d6efd; color: #e9f1ff; }
.bubble.mine { align-self: flex-end; }
.bubble.clipped { width: 61px; }
.bar { width: 15px; background: #f0f0f0; display: flex; flex-direction: column; align-items: center; }
.thumb { display: block; width: 11px; background: #c1c1c1; }
.arrow { display: block; width: 0; height: 0; border: 4px solid transparent; flex: none; }
.arrow.up { border-top: 0; border-bottom-color: #505050; margin-top: 6px; }
.arrow.down { border-bottom: 0; border-top-color: #505050; margin-bottom: 6px; }
.arrow.off.up { border-bottom-color: #a3a3a3; }
.arrow.off.down { border-top-color: #a3a3a3; }
.behind .arrow { margin: 0; }
.chat .thumb { margin: auto 0 5px; }
.admin .chat .thumb { height: 108px; }
.client .chat .thumb { height: 78px; }
.pagebar .thumb { height: 853px; margin: 5px 0 auto; }
.compose { flex: 1; display: flex; align-items: center; border-top: 1px solid #cfd1d3; padding: 0 15px; gap: 7px; }
.field { flex: 1; height: 37px; line-height: 35px; border: 1px solid #dee2e6; border-radius: 5px; padding-left: 10px; font-size: 14.400px; color: #5b6066; box-shadow: 0 1px 3px rgba(0, 0, 0, .075); }
.send { width: 38px; height: 37px; border-radius: 5px; background: #0d6efd; color: #fff; }
.client .field, .client .send { height: 36px; margin-top: -1px; }

.foot { position: relative; box-shadow: 0 14.400px 43px rgba(0, 0, 0, .175); clip-path: inset(-60px 0 0 0); }
.admin .foot { height: 174px; }
.cols { height: 144px; display: flex; padding: 22px 0 0 45.400px; background: #f8f9fb; }
.cols > div { width: 288px; white-space: nowrap; }
.cols h3 { font-size: 18px; letter-spacing: -.26px; line-height: 22px; font-weight: 700; margin-bottom: 6px; }
.cols p { line-height: 16.200px; }
.cols u { text-underline-offset: 1.500px; }
.copy { height: 30px; background: #212529; color: #fff; text-align: center; line-height: 30px; }
.client .foot { height: 60px; background: #fff; border-top: 1px solid #dee2e6; display: flex; align-items: center; justify-content: space-between; padding: 0 25px 3px 11px; color: #5c6167; }
.client .foot a { color: #0d7bff; }
.links { display: flex; gap: 36px; }

.taskbar { position: absolute; left: 0; top: 1032px; width: 1920px; height: 48px; background: #c9c8d1; z-index: 4; display: flex; align-items: center; }
.marble { position: absolute; inset: 0; width: 100%; height: 100%; overflow: hidden; }
.start { position: relative; width: 42px; height: 40px; margin-left: 4px; border-radius: 7px; background: #a2acbb; display: flex; align-items: center; justify-content: center; }
.apps { position: relative; display: flex; margin-left: 370px; }
.app { position: relative; width: 64px; height: 48px; display: flex; align-items: center; justify-content: center; }
.dot { position: absolute; bottom: 0; left: 30px; width: 3px; height: 3px; border-radius: 50%; background: #123a63; }
.focus { position: absolute; bottom: 0; left: 4px; display: flex; gap: 3px; }
.focus i { width: 3px; height: 3px; border-radius: 50%; background: #123a63; }
.focus i:first-child { width: 38px; border-radius: 2px; }
.term { width: 28px; height: 25px; background: #455a64; border-radius: 1px; color: #e8eef0; font: 700 8px/14px "Liberation Mono", monospace; padding-left: 2px; }
.zoomapp { width: 32px; height: 34px; border-radius: 11px; background: #0b5cff; color: #fff; font-size: 9px; font-weight: 600; line-height: 33px; text-align: center; }
.tray { position: relative; display: flex; margin-left: 72px; align-items: center; }
.tray span { width: 34px; display: flex; justify-content: center; }
.tray .wide { margin-right: 8px; }
.tray .near { width: 28px; }
.clock { position: relative; display: flex; align-items: center; gap: 7px; margin-left: 32px; font-size: 13.200px; font-weight: 700; color: #123254; white-space: nowrap; }
.clock i { width: 9px; height: 9px; border-radius: 50%; background: #123254; margin-left: 12px; }
</style>
